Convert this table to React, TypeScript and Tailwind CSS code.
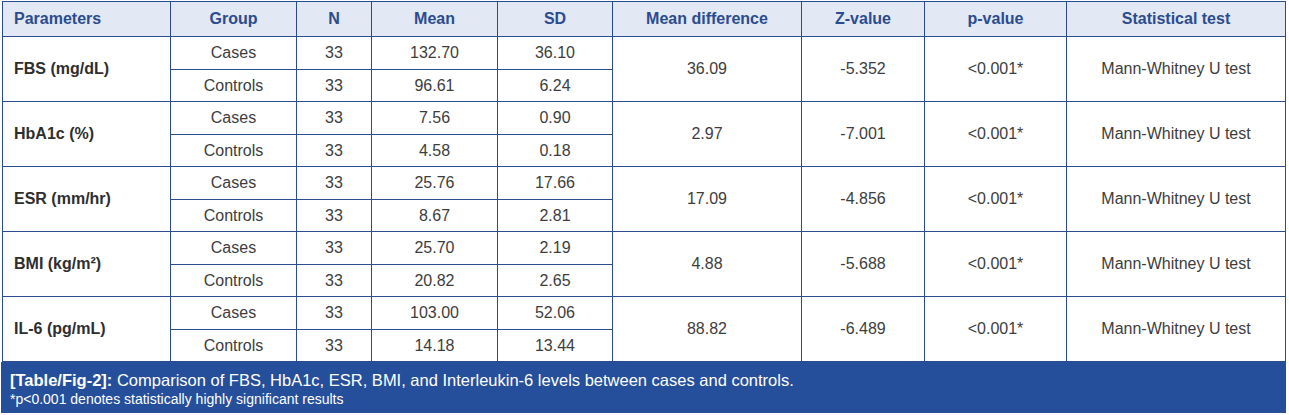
const rows = [
  { param: "FBS (mg/dL)", cases: ["132.70", "36.10"], controls: ["96.61", "6.24"], diff: "36.09", z: "-5.352" },
  { param: "HbA1c (%)", cases: ["7.56", "0.90"], controls: ["4.58", "0.18"], diff: "2.97", z: "-7.001" },
  { param: "ESR (mm/hr)", cases: ["25.76", "17.66"], controls: ["8.67", "2.81"], diff: "17.09", z: "-4.856" },
  { param: "BMI (kg/m²)", cases: ["25.70", "2.19"], controls: ["20.82", "2.65"], diff: "4.88", z: "-5.688" },
  { param: "IL-6 (pg/mL)", cases: ["103.00", "52.06"], controls: ["14.18", "13.44"], diff: "88.82", z: "-6.489" },
];

const widths = [168, 126, 75, 126, 115, 189, 123, 142, 219];
const heads = ["Parameters", "Group", "N", "Mean", "SD", "Mean difference", "Z-value", "p-value", "Statistical test"];

const cell = "border border-[#2b4c8e] text-center align-middle p-0";

export default function App() {
  return (
    <div className="w-[1289px] h-[415px] bg-white pt-[1px] font-['Liberation_Sans',Arial,sans-serif] text-[16px] text-[#3d3d3d]">
      <div className="ml-[2px] w-[1283px]">
        <table className="w-[1283px] table-fixed border-collapse">
          <colgroup>
            {widths.map((w, i) => (
              <col key={i} style={{ width: w }} />
            ))}
          </colgroup>
          <thead>
            <tr className="h-[35px] bg-[#e2e8f4]">
              {heads.map((h, i) => (
                <th
                  key={h}
                  className={`${cell} font-bold text-[#2b4c8e] ${i === 0 ? "text-left pl-[11px]" : ""}`}
                >
                  {h}
                </th>
              ))}
            </tr>
          </thead>
          <tbody>
            {rows.map((r) => (
              <>
                <tr key={r.param + "a"} className="h-[33px]">
                  <td rowSpan={2} className={`${cell} text-left pl-[11px] font-bold text-[#2e2e2e]`}>
                    {r.param}
                  </td>
                  <td className={cell}>Cases</td>
                  <td className={cell}>33</td>
                  <td className={cell}>{r.cases[0]}</td>
                  <td className={cell}>{r.cases[1]}</td>
                  <td rowSpan={2} className={cell}>{r.diff}</td>
                  <td rowSpan={2} className={cell}>{r.z}</td>
                  <td rowSpan={2} className={cell}>&lt;0.001*</td>
                  <td rowSpan={2} className={cell}>Mann-Whitney U test</td>
                </tr>
                <tr key={r.param + "b"} className="h-[32px]">
                  <td className={cell}>Controls</td>
                  <td className={cell}>33</td>
                  <td className={cell}>{r.controls[0]}</td>
                  <td className={cell}>{r.controls[1]}</td>
                </tr>
              </>
            ))}
          </tbody>
        </table>
      </div>
      <div className="ml-[1px] w-[1285px] h-[51px] bg-[#264f9b] text-white pl-[9px] pt-[8px]">
        <p className="text-[16.5px] leading-[20px]">
          <span className="font-bold">[Table/Fig-2]:</span> Comparison of FBS, HbA1c, ESR, BMI, and Interleukin-6 levels between cases and controls.
        </p>
        <p className="text-[14px] leading-[18px]">*p&lt;0.001 denotes statistically highly significant results</p>
      </div>
    </div>
  );
}
